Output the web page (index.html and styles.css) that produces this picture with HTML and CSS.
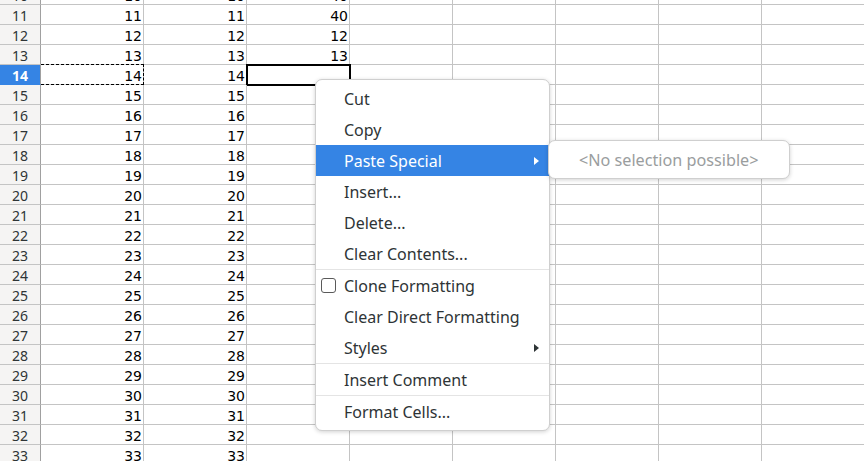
FILE: index.html
```html
<!DOCTYPE html>
<html lang="en">
<head>
    <meta charset="UTF-8">
    <title>Sheet - context menu</title>
    <link rel="stylesheet" href="styles.css">
</head>
<body>
    <div class="sheet">
        <div class="row"><div class="hd">10</div><div class="c">10</div><div class="c">10</div><div class="c">40</div><div class="c"></div><div class="c"></div><div class="c"></div><div class="c"></div><div class="c"></div></div>
        <div class="row"><div class="hd">11</div><div class="c">11</div><div class="c">11</div><div class="c">40</div><div class="c"></div><div class="c"></div><div class="c"></div><div class="c"></div><div class="c"></div></div>
        <div class="row"><div class="hd">12</div><div class="c">12</div><div class="c">12</div><div class="c">12</div><div class="c"></div><div class="c"></div><div class="c"></div><div class="c"></div><div class="c"></div></div>
        <div class="row"><div class="hd">13</div><div class="c">13</div><div class="c">13</div><div class="c">13</div><div class="c"></div><div class="c"></div><div class="c"></div><div class="c"></div><div class="c"></div></div>
        <div class="row"><div class="hd active">14</div><div class="c copied">14</div><div class="c">14</div><div class="c cursor"></div><div class="c"></div><div class="c"></div><div class="c"></div><div class="c"></div><div class="c"></div></div>
        <div class="row"><div class="hd">15</div><div class="c">15</div><div class="c">15</div><div class="c"></div><div class="c"></div><div class="c"></div><div class="c"></div><div class="c"></div><div class="c"></div></div>
        <div class="row"><div class="hd">16</div><div class="c">16</div><div class="c">16</div><div class="c"></div><div class="c"></div><div class="c"></div><div class="c"></div><div class="c"></div><div class="c"></div></div>
        <div class="row"><div class="hd">17</div><div class="c">17</div><div class="c">17</div><div class="c"></div><div class="c"></div><div class="c"></div><div class="c"></div><div class="c"></div><div class="c"></div></div>
        <div class="row"><div class="hd">18</div><div class="c">18</div><div class="c">18</div><div class="c"></div><div class="c"></div><div class="c"></div><div class="c"></div><div class="c"></div><div class="c"></div></div>
        <div class="row"><div class="hd">19</div><div class="c">19</div><div class="c">19</div><div class="c"></div><div class="c"></div><div class="c"></div><div class="c"></div><div class="c"></div><div class="c"></div></div>
        <div class="row"><div class="hd">20</div><div class="c">20</div><div class="c">20</div><div class="c"></div><div class="c"></div><div class="c"></div><div class="c"></div><div class="c"></div><div class="c"></div></div>
        <div class="row"><div class="hd">21</div><div class="c">21</div><div class="c">21</div><div class="c"></div><div class="c"></div><div class="c"></div><div class="c"></div><div class="c"></div><div class="c"></div></div>
        <div class="row"><div class="hd">22</div><div class="c">22</div><div class="c">22</div><div class="c"></div><div class="c"></div><div class="c"></div><div class="c"></div><div class="c"></div><div class="c"></div></div>
        <div class="row"><div class="hd">23</div><div class="c">23</div><div class="c">23</div><div class="c"></div><div class="c"></div><div class="c"></div><div class="c"></div><div class="c"></div><div class="c"></div></div>
        <div class="row"><div class="hd">24</div><div class="c">24</div><div class="c">24</div><div class="c"></div><div class="c"></div><div class="c"></div><div class="c"></div><div class="c"></div><div class="c"></div></div>
        <div class="row"><div class="hd">25</div><div class="c">25</div><div class="c">25</div><div class="c"></div><div class="c"></div><div class="c"></div><div class="c"></div><div class="c"></div><div class="c"></div></div>
        <div class="row"><div class="hd">26</div><div class="c">26</div><div class="c">26</div><div class="c"></div><div class="c"></div><div class="c"></div><div class="c"></div><div class="c"></div><div class="c"></div></div>
        <div class="row"><div class="hd">27</div><div class="c">27</div><div class="c">27</div><div class="c"></div><div class="c"></div><div class="c"></div><div class="c"></div><div class="c"></div><div class="c"></div></div>
        <div class="row"><div class="hd">28</div><div class="c">28</div><div class="c">28</div><div class="c"></div><div class="c"></div><div class="c"></div><div class="c"></div><div class="c"></div><div class="c"></div></div>
        <div class="row"><div class="hd">29</div><div class="c">29</div><div class="c">29</div><div class="c"></div><div class="c"></div><div class="c"></div><div class="c"></div><div class="c"></div><div class="c"></div></div>
        <div class="row"><div class="hd">30</div><div class="c">30</div><div class="c">30</div><div class="c"></div><div class="c"></div><div class="c"></div><div class="c"></div><div class="c"></div><div class="c"></div></div>
        <div class="row"><div class="hd">31</div><div class="c">31</div><div class="c">31</div><div class="c"></div><div class="c"></div><div class="c"></div><div class="c"></div><div class="c"></div><div class="c"></div></div>
        <div class="row"><div class="hd">32</div><div class="c">32</div><div class="c">32</div><div class="c"></div><div class="c"></div><div class="c"></div><div class="c"></div><div class="c"></div><div class="c"></div></div>
        <div class="row"><div class="hd">33</div><div class="c">33</div><div class="c">33</div><div class="c"></div><div class="c"></div><div class="c"></div><div class="c"></div><div class="c"></div><div class="c"></div></div>
    </div>

    <!-- context menu over the grid -->
    <div class="menu">
        <div class="item"><span class="mark"></span>Cut</div>
        <div class="item"><span class="mark"></span>Copy</div>
        <div class="item hover"><span class="mark"></span>Paste Special<span class="arrow"></span></div>
        <div class="item"><span class="mark"></span>Insert...</div>
        <div class="item"><span class="mark"></span>Delete...</div>
        <div class="item"><span class="mark"></span>Clear Contents...</div>
        <div class="sep"></div>
        <div class="item"><span class="mark"><span class="check"></span></span>Clone Formatting</div>
        <div class="item"><span class="mark"></span>Clear Direct Formatting</div>
        <div class="item"><span class="mark"></span>Styles<span class="arrow"></span></div>
        <div class="sep"></div>
        <div class="item"><span class="mark"></span>Insert Comment</div>
        <div class="sep"></div>
        <div class="item"><span class="mark"></span>Format Cells...</div>
    </div>

    <div class="submenu">
        <div class="item disabled">&lt;No selection possible&gt;</div>
    </div>
</body>
</html>
```

FILE: styles.css
```css
body {
    margin: 0;
    background: #fff;
    overflow: hidden;
    height: 461px;
}

.sheet {
    margin-top: -15px;
}

.row {
    display: flex;
    height: 20px;
}

.hd {
    flex: none;
    width: 41px;
    height: 20px;
    box-sizing: border-box;
    padding-top: 3px;
    background: #f5f4f3;
    border-right: 1px solid #a0a0a0;
    border-bottom: 1px solid #c4c4c4;
    font-family: "Noto Sans", sans-serif;
    font-size: 14px;
    line-height: 16px;
    color: #2e3436;
    text-align: center;
}

.hd.active {
    background: #3584e4;
    border-bottom-color: #3584e4;
    color: #fff;
    font-weight: bold;
}

.c {
    flex: none;
    position: relative;
    width: 103px;
    height: 20px;
    box-sizing: border-box;
    padding: 3px 1px 0 0;
    border-right: 1px solid #c4c4c4;
    border-bottom: 1px solid #c4c4c4;
    font-family: "DejaVu Sans", sans-serif;
    font-size: 14px;
    line-height: 16px;
    color: #000;
    text-align: right;
}

/* marching ants round the copied cell */
.c.copied::after {
    content: "";
    position: absolute;
    top: -1px;
    left: 0;
    right: -1px;
    bottom: -1px;
    border: 1px dashed #000;
    border-left: none;
}

.c.cursor::after {
    content: "";
    position: absolute;
    top: -1px;
    left: -1px;
    right: -2px;
    bottom: -2px;
    border: 2px solid #000;
}

.menu,
.submenu {
    position: absolute;
    box-sizing: border-box;
    padding: 3px 0;
    background: #fff;
    border: 1px solid #cfcfcf;
    border-radius: 7px;
    box-shadow: 0 1px 4px rgba(0, 0, 0, 0.18);
    font-family: "Noto Sans", sans-serif;
    font-size: 16px;
    color: #2e3436;
}

.menu {
    left: 315px;
    top: 79px;
    width: 235px;
}

.submenu {
    left: 548px;
    top: 140px;
    width: 242px;
    z-index: 2;
}

.item {
    display: flex;
    align-items: center;
    height: 31px;
    padding-right: 10px;
    white-space: nowrap;
}

.item.hover {
    background: #3584e4;
    color: #fff;
}

.item.disabled {
    padding-left: 30px;
    font-size: 16.2px;
    color: #9a9d9e;
}

.mark {
    flex: none;
    display: flex;
    align-items: center;
    width: 28px;
    height: 100%;
}

.check {
    width: 15px;
    height: 15px;
    box-sizing: border-box;
    margin-left: 5px;
    border: 1px solid #5a5a5a;
    border-radius: 3px;
    background: #fff;
}

.arrow {
    margin-left: auto;
    width: 0;
    height: 0;
    border-left: 5px solid currentColor;
    border-top: 4.5px solid transparent;
    border-bottom: 4.5px solid transparent;
}

.sep {
    height: 1px;
    background: #e4e4e4;
}
```
